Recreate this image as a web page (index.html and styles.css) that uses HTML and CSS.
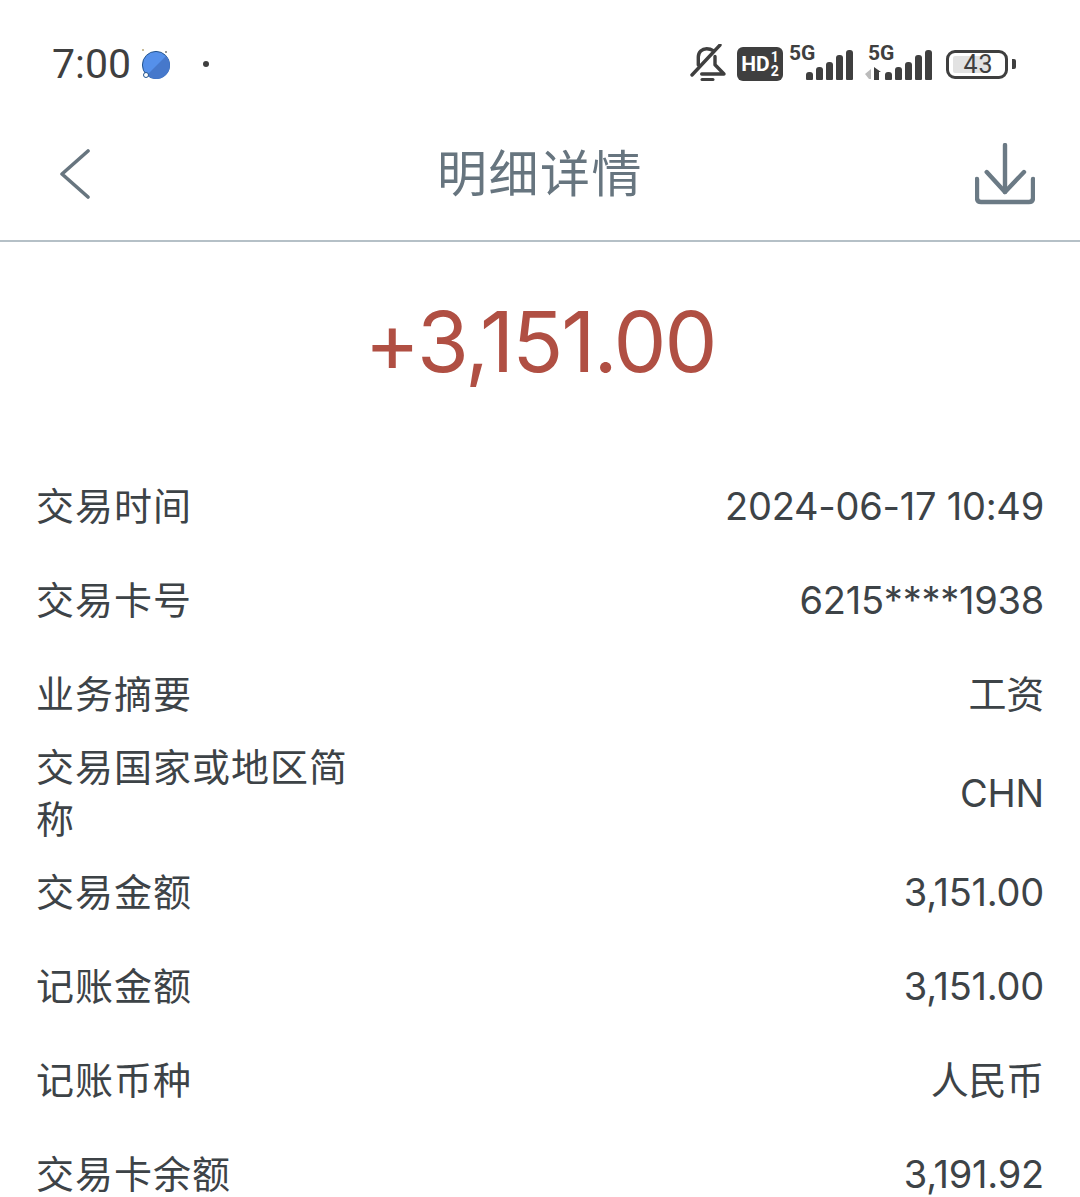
FILE: index.html
```html
<!DOCTYPE html>
<html lang="zh-CN">
<head>
    <meta charset="UTF-8">
    <meta name="viewport" content="width=device-width, initial-scale=1.0">
    <title>明细详情</title>
    <link rel="stylesheet" href="styles.css">
</head>
<body>
    <div class="status-bar">
        <div class="status-left">
            <span class="clock">7:00</span>
            <svg class="planet" width="36" height="36" viewBox="0 0 36 36">
                <circle cx="17" cy="19" r="13.6" fill="#5590ea" stroke="#24558f" stroke-width="1"/>
                <path d="M27 10A13.2 13.2 0 0 1 8 29Z" fill="#4678cb"/>
                <circle cx="7" cy="29" r="2.5" fill="#fff" stroke="#24558f"/>
                <circle cx="4" cy="4" r="1" fill="#b9a77a"/>
                <circle cx="27" cy="6" r="1" fill="#777"/>
            </svg>
            <span class="dot"></span>
        </div>
        <div class="status-right">
            <svg class="bell" width="38" height="40" viewBox="0 0 38 40" fill="none" stroke="#3f3f3f" stroke-width="3.4" stroke-linecap="round" stroke-linejoin="round">
                <path d="M2 31L30 1"/>
                <path d="M8.3 21V13C8.3 8 12 4.7 16.7 4.7C19.5 4.7 21.5 5.5 23.3 6.7"/>
                <path d="M25 12.5V20.7L34 30H11.7"/>
                <path d="M12 35.5H23" stroke-width="3"/>
            </svg>
            <span class="hd"><b>HD</b><span class="hd-sims"><i>1</i><i>2</i></span></span>
            <div class="signal">
                <span class="net">5G</span>
                <div class="bars"><i class="b1"></i><i class="b2"></i><i class="b3"></i><i class="b4"></i><i class="b5"></i></div>
            </div>
            <div class="signal signal-second">
                <span class="net">5G</span>
                <div class="bars">
                    <svg class="arrows" width="17" height="13" viewBox="0 0 17 13"><path d="M0 7L6 2V12H4Z" fill="#bbb"/><path d="M9 0L16 5H14V13H9Z" fill="#3f3f3f"/></svg>
                    <i class="b1"></i><i class="b2"></i><i class="b3"></i><i class="b4"></i><i class="b5"></i>
                </div>
            </div>
            <div class="battery">
                <div class="battery-body"><span class="battery-fill"></span><span class="battery-num">43</span></div>
                <span class="battery-cap"></span>
            </div>
        </div>
    </div>

    <div class="title-bar">
        <svg class="back" width="32" height="50" viewBox="0 0 32 50" fill="none" stroke="#67757f" stroke-width="3.6" stroke-linecap="round" stroke-linejoin="round">
            <path d="M29 2L3 25L29 48"/>
        </svg>
        <h1>明细详情</h1>
        <svg class="download" width="60" height="62" viewBox="0 0 60 62" fill="none" stroke="#6b7a85" stroke-width="4.4" stroke-linecap="round" stroke-linejoin="round">
            <path d="M30 2V49"/>
            <path d="M11.7 29L30 49L49 29"/>
            <path d="M2 36V55Q2 59 6 59H54Q58 59 58 55V36"/>
        </svg>
    </div>

    <div class="amount">+3,151.00</div>

    <div class="details">
        <div class="row"><span class="label">交易时间</span><span class="value">2024-06-17 10:49</span></div>
        <div class="row"><span class="label">交易卡号</span><span class="value">6215****1938</span></div>
        <div class="row"><span class="label">业务摘要</span><span class="value">工资</span></div>
        <div class="row row-tall"><span class="label">交易国家或地区简称</span><span class="value">CHN</span></div>
        <div class="row"><span class="label">交易金额</span><span class="value">3,151.00</span></div>
        <div class="row"><span class="label">记账金额</span><span class="value">3,151.00</span></div>
        <div class="row"><span class="label">记账币种</span><span class="value">人民币</span></div>
        <div class="row"><span class="label">交易卡余额</span><span class="value">3,191.92</span></div>
    </div>
</body>
</html>
```

FILE: styles.css
```css
html, body {
    height: 100%;
}

body {
    margin: 0;
    background: #fff;
    color: #3d4347;
    font-family: Inter, "Noto Sans CJK SC", sans-serif;
    overflow: hidden;
}

.status-bar {
    height: 120px;
    padding: 8px 64px 0 52px;
    box-sizing: border-box;
    display: flex;
    justify-content: space-between;
    align-items: center;
    color: #3f3f3f;
}

.status-left {
    display: flex;
    align-items: center;
}

.clock {
    font-family: Roboto, sans-serif;
    font-size: 41px;
    line-height: 50px;
}

.planet {
    margin-left: 8px;
}

.dot {
    width: 6px;
    height: 6px;
    border-radius: 50%;
    background: #3f3f3f;
    margin-left: 28px;
}

.status-right {
    display: flex;
    align-items: center;
}

.hd {
    display: flex;
    align-items: center;
    justify-content: center;
    gap: 1px;
    width: 46px;
    height: 34px;
    margin-left: 9px;
    background: #3f3f3f;
    border-radius: 6px;
    color: #fff;
    font-family: Roboto, sans-serif;
}

.hd b {
    font-size: 21px;
}

.hd-sims {
    display: flex;
    flex-direction: column;
    font-size: 14px;
    font-weight: 700;
    line-height: 14px;
}

.hd-sims i {
    font-style: normal;
}

.signal {
    width: 64px;
    height: 38px;
    margin-left: 6px;
    position: relative;
    font-family: Roboto, sans-serif;
}

.signal-second {
    width: 67px;
    margin-left: 12px;
}

.signal-second .net {
    left: 3px;
}

.net {
    position: absolute;
    left: 0;
    top: -3px;
    font-size: 21px;
    font-weight: 700;
    line-height: 22px;
}

.bars {
    position: absolute;
    right: 0;
    bottom: 3px;
    display: flex;
    align-items: flex-end;
    gap: 3px;
}

.bars i {
    width: 7px;
    border-radius: 3px 3px 1px 1px;
    background: #3f3f3f;
}

.bars .b1 { height: 8px; }
.bars .b2 { height: 13px; }
.bars .b3 { height: 18px; }
.bars .b4 { height: 25px; }
.bars .b5 { height: 30px; }

.battery {
    display: flex;
    align-items: center;
    margin-left: 14px;
}

.battery-body {
    position: relative;
    width: 62px;
    height: 29px;
    border: 3px solid #3f3f3f;
    border-radius: 9px;
    box-sizing: border-box;
}

.battery-fill {
    position: absolute;
    left: 4px;
    top: 3px;
    bottom: 3px;
    width: 36px;
    background: #e2e2e2;
    border-radius: 2px;
}

.battery-num {
    position: absolute;
    inset: 0;
    padding-left: 3px;
    text-align: center;
    font-family: Roboto, sans-serif;
    font-size: 25px;
    line-height: 23px;
    letter-spacing: 1px;
}

.battery-cap {
    width: 4px;
    height: 10px;
    margin-left: 4px;
    background: #3f3f3f;
    border-radius: 0 2px 2px 0;
}

.title-bar {
    height: 122px;
    padding: 0 45px 12px 45px;
    box-sizing: border-box;
    display: grid;
    grid-template-columns: 1fr auto 1fr;
    align-items: center;
    border-bottom: 2px solid #b5c0c7;
}

.title-bar h1 {
    margin: 0;
    font-size: 50px;
    font-weight: 400;
    line-height: 60px;
    letter-spacing: 1.5px;
    color: #67757f;
}

.back {
    margin-left: 14px;
}

.download {
    justify-self: end;
}

.amount {
    height: 218px;
    box-sizing: border-box;
    padding-top: 44px;
    text-align: center;
    font-size: 84px;
    line-height: 112px;
    letter-spacing: -2px;
    color: #b04f43;
}

.row {
    height: 94px;
    box-sizing: border-box;
    padding: 0 36px 2px;
    display: flex;
    justify-content: space-between;
    align-items: center;
    font-size: 38px;
    line-height: 52px;
}

.row-tall {
    height: 104px;
}

.label {
    width: 312px;
    letter-spacing: 1px;
}

.value {
    text-align: right;
    letter-spacing: -0.25px;
}
```
